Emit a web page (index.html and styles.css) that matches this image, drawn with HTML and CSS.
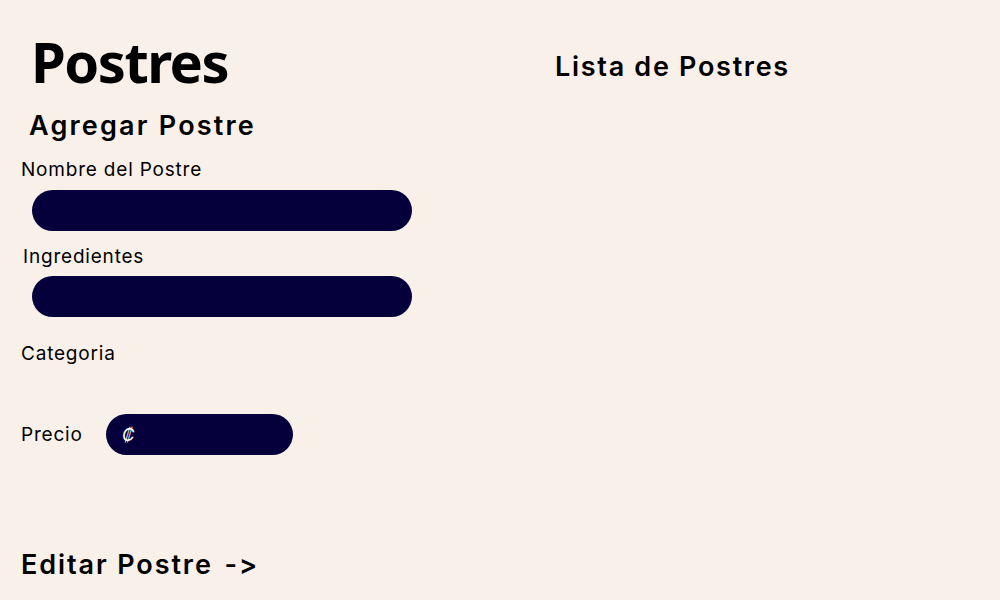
FILE: index.html
```html
<!DOCTYPE html>
<html lang="es">
<head>
<meta charset="utf-8">
<title>Postres</title>
<link rel="stylesheet" href="styles.css">
</head>
<body>
<div class="page">
  <section class="left">
    <h1 class="title">Postres</h1>
    <h2 class="heading subtitle">Agregar Postre</h2>
    <div class="field field-name">
      <label class="label">Nombre del Postre</label>
      <div class="input wide"></div>
    </div>
    <div class="field field-ing">
      <label class="label label-ing">Ingredientes</label>
      <div class="input wide"></div>
    </div>
    <div class="field field-cat">
      <label class="label">Categoria</label>
    </div>
    <div class="price-row">
      <label class="label">Precio</label>
      <div class="input price"><span class="colon">₡</span></div>
    </div>
    <div class="heading edit">Editar Postre <span class="arrow">-&gt;</span></div>
  </section>
  <section class="right">
    <h2 class="heading list-title">Lista de Postres</h2>
  </section>
</div>
</body>
</html>
```

FILE: styles.css
```css
* { box-sizing: border-box; }
html, body { margin: 0; padding: 0; }
body {
  background: #f9f1e9;
  color: #000;
  font-family: "Inter", "Noto Sans", sans-serif;
  font-feature-settings: "calt" 0, "liga" 0;
  width: 1000px;
  height: 600px;
  overflow: hidden;
}
.page {
  display: flex;
  height: 600px;
}
.left {
  width: 540px;
  padding-left: 21px;
  display: flex;
  flex-direction: column;
}
.right {
  flex: 1;
  padding-left: 15px;
}
.title {
  margin: 27px 0 0 10px;
  font-family: "Noto Sans", sans-serif;
  font-weight: 700;
  font-size: 56px;
  line-height: 68px;
  letter-spacing: -1.5px;
}
.heading {
  font-weight: 600;
  font-size: 27px;
  line-height: 34px;
  letter-spacing: 2px;
}
.subtitle {
  margin: 14px 0 0 8px;
  letter-spacing: 2.2px;
}
.list-title {
  margin: 50px 0 0 0;
  letter-spacing: 1.7px;
}
.field {
  display: flex;
  flex-direction: column;
}
.label {
  font-size: 19px;
  line-height: 24px;
  font-weight: 400;
  letter-spacing: 0.8px;
}
.field-name { margin-top: 15px; }
.field-ing { margin-top: 14px; }
.field-cat { margin-top: 25px; }
.label-ing { margin-left: 2px; }
.input {
  background: #05003c;
  border-radius: 21px;
  height: 41px;
}
.wide {
  width: 380px;
  margin: 8px 0 0 11px;
}
.field-ing .wide { margin-top: 7px; }
.price-row {
  display: flex;
  align-items: center;
  margin-top: 48px;
}
.price-row .label { width: 85px; }
.price {
  width: 187px;
  display: flex;
  align-items: center;
  padding-left: 16px;
}
.colon {
  color: #fff;
  font-size: 17px;
  font-style: italic;
  letter-spacing: 0;
}
.edit {
  margin-top: 93px;
  letter-spacing: 1.9px;
}
.arrow { margin-left: 3px; }
```
